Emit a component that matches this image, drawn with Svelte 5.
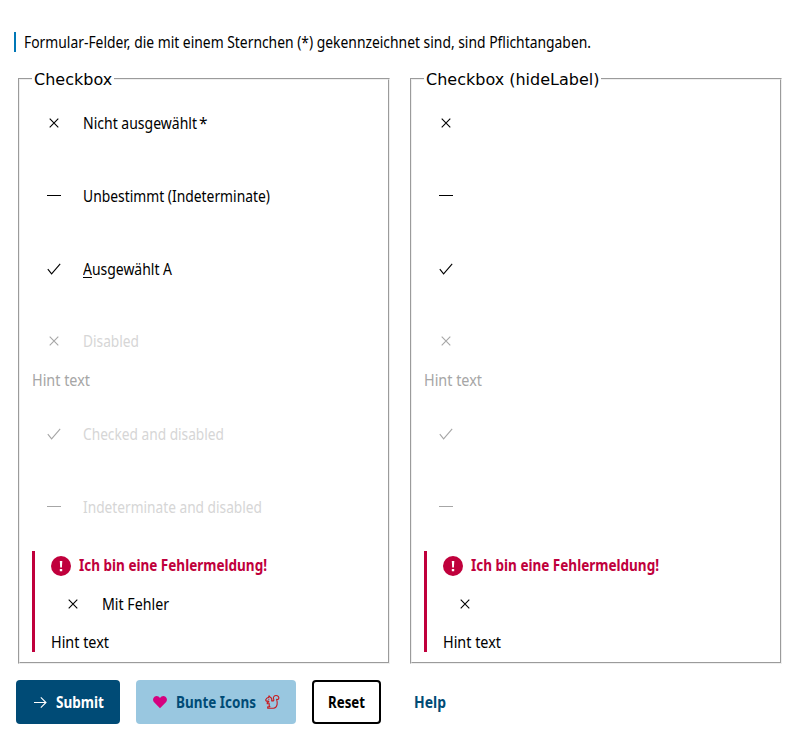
<script>
  const rows = [
    { icon: 'cross', label: 'Nicht ausgewählt', required: true, width: 114 },
    { icon: 'minus', label: 'Unbestimmt (Indeterminate)', width: 187 },
    { icon: 'check', label: 'usgewählt A', key: 'A', width: 89, short: true },
    { icon: 'cross', label: 'Disabled', width: 56, disabled: true, hint: true },
    { icon: 'check', label: 'Checked and disabled', width: 141, disabled: true },
    { icon: 'minus', label: 'Indeterminate and disabled', width: 179, disabled: true }
  ];
  const groups = [
    { title: 'Checkbox', hideLabel: false },
    { title: 'Checkbox (hideLabel)', hideLabel: true }
  ];

  // Condenses a line of text to the given width.
  function fit(node, width) {
    const natural = node.getBoundingClientRect().width;
    node.style.transform = `scaleX(${width / natural})`;
    node.parentElement.style.width = `${width}px`;
  }
</script>

{#snippet text(value, width, key = '')}
  <span class="line"><span class="fit" use:fit={width}>{#if key}<u>{key}</u>{/if}{value}</span></span>
{/snippet}

{#snippet mark(icon)}
  <svg class="mark" width="16" height="16" viewBox="0 0 16 16" fill="none" stroke="currentColor" stroke-width="1.1">
    {#if icon === 'cross'}
      <path d="M3.7 3.7l8.6 8.6M12.3 3.7l-8.6 8.6" />
    {:else if icon === 'minus'}
      <path d="M1 7.5h14" stroke-width="1" />
    {:else}
      <path d="M1.8 8.2l3.8 4.7L14.2 2.8" />
    {/if}
  </svg>
{/snippet}

<main>
  <p class="note">{@render text('Formular-Felder, die mit einem Sternchen (*) gekennzeichnet sind, sind Pflichtangaben.', 567)}</p>

  <div class="groups">
    {#each groups as group}
      <fieldset>
        <legend>{group.title}</legend>
        {#each rows as row}
          <div class="item" class:disabled={row.disabled} class:hinted={row.hint} class:short={row.short}>
            <label class="row">
              {@render mark(row.icon)}
              {#if !group.hideLabel}
                <span class="label">{@render text(row.label, row.width, row.key)}{#if row.required}<span class="star">*</span>{/if}</span>
              {/if}
            </label>
            {#if row.hint}
              <div class="hint">{@render text('Hint text', 58)}</div>
            {/if}
          </div>
        {/each}
        <div class="error">
          <div class="message">
            <svg width="20" height="20" viewBox="0 0 20 20">
              <circle cx="10" cy="10" r="10" fill="#c0003c" />
              <path d="M8.8 5h2.5l-.4 6.4H9.2zM8.8 13h2.4v2.3H8.8z" fill="#fff" />
            </svg>
            <span class="message-text">{@render text('Ich bin eine Fehlermeldung!', 188)}</span>
          </div>
          <label class="row">
            {@render mark('cross')}
            {#if !group.hideLabel}
              <span class="label">{@render text('Mit Fehler', 67)}</span>
            {/if}
          </label>
          <div class="hint">{@render text('Hint text', 58)}</div>
        </div>
      </fieldset>
    {/each}
  </div>

  <div class="buttons">
    <button class="submit">
      <svg width="16" height="16" viewBox="0 0 16 16" fill="none" stroke="currentColor" stroke-width="1.1">
        <path d="M2 8.5h12M8.8 3.3L14 8.5l-5.2 5.2" />
      </svg>
      {@render text('Submit', 48)}
    </button>
    <button class="colored">
      <svg width="16" height="16" viewBox="0 0 16 16">
        <path d="M8 14.2L2.1 8.3C.5 6.6.8 3.9 2.5 2.7 4.3 1.400 6.800 2 8 4c1.200-2 3.700-2.600 5.500-1.300 1.700 1.200 2 3.900.4 5.600z" fill="#d5007f" />
      </svg>
      {@render text('Bunte Icons', 80)}
      <svg width="16" height="16" viewBox="0 0 16 16" fill="none" stroke="#c8191e" stroke-width="1.1" stroke-linejoin="round">
        <path d="M4.600 3.500L5 1.800l1.300 1.500c1.400.6 1.800 2 1.400 3.600h1.800c.7-.5.5-1.200.1-2C8.900 3 10.300 1.500 12 1.500c1.900 0 3.100 1.400 2.800 2.900-.2 1-1.200 1.300-2.200.9.6 1.900 1 3.300.5 5.200-.5 2.100-1.700 3.700-3.600 3.700H3.700v-1.300l2.200-.3c-.9-.8-1.100-1.800-.5-2.900H3.200V8.500l1.700-.5-.5-.9H2.300L1.600 6l1-1.500c.5-.7 1.200-1 2-1z" />
        <path d="M4.200 5.200h1.100" />
      </svg>
    </button>
    <button class="reset">{@render text('Reset', 37)}</button>
    <button class="help">{@render text('Help', 32)}</button>
  </div>
</main>

<style>
  :global(body) {
    background: #fff;
  }

  main {
    box-sizing: border-box;
    padding: 32px 16px 0 14px;
    font: 15.5px/20px 'Noto Sans', 'Open Sans', sans-serif;
    color: #000;
  }

  .line {
    display: inline-block;
    white-space: nowrap;
  }

  .fit {
    display: inline-block;
    transform-origin: 0 50%;
  }

  u {
    text-decoration-thickness: 1px;
    text-underline-offset: 2px;
  }

  .note {
    display: flex;
    align-items: center;
    height: 20px;
    margin: 0;
    padding-left: 8px;
    border-left: 2px solid #0077b6;
  }

  .groups {
    display: flex;
    gap: 20px;
    margin: 17px 0 0 4px;
  }

  fieldset {
    box-sizing: border-box;
    width: 372px;
    height: 595px;
    min-width: 0;
    margin: 0;
    padding: 13px 12px 10px;
  }

  legend {
    height: 20px;
    padding: 0 2px;
    font: 16px/22px 'DejaVu Sans', sans-serif;
  }

  .item {
    height: 73px;
  }

  .item.short {
    height: 72px;
  }

  .item.hinted {
    height: 93px;
  }

  .row {
    display: flex;
    align-items: center;
    height: 44px;
    padding-left: 14px;
  }

  .mark {
    flex: none;
    margin-top: -2px;
  }

  .label {
    display: flex;
    margin: -2px 0 0 21px;
  }

  .star {
    margin-left: 2px;
  }

  .disabled .mark,
  .disabled .hint {
    color: #a6a6a6;
  }

  .disabled .label {
    color: #d6d6d6;
  }

  .item .hint {
    margin-top: 6px;
  }

  .error {
    box-sizing: border-box;
    height: 101px;
    margin-top: -8px;
    padding: 5px 0 0 16px;
    border-left: 3px solid #c0003c;
  }

  .message {
    display: flex;
    align-items: center;
    gap: 8px;
    height: 20px;
    color: #c0003c;
    font-weight: 700;
  }

  .message-text {
    display: flex;
    margin-top: -2px;
  }

  .error .row {
    margin-top: 7px;
  }

  .error .hint {
    margin-top: 5px;
  }

  .buttons {
    display: flex;
    gap: 16px;
    margin: 16px 0 0 2px;
  }

  button {
    display: flex;
    align-items: center;
    justify-content: center;
    gap: 8px;
    box-sizing: border-box;
    height: 44px;
    padding: 0 16px;
    border: 0;
    border-radius: 4px;
    font: inherit;
    font-weight: 700;
    color: #004b76;
    background: transparent;
  }

  .submit {
    width: 104px;
    color: #fff;
    background: #004b76;
  }

  .colored {
    width: 160px;
    background: #99c7e0;
  }

  .reset {
    width: 69px;
    padding: 0;
    border: 2px solid #000;
    color: #000;
  }

  .help {
    width: 65px;
  }
</style>
